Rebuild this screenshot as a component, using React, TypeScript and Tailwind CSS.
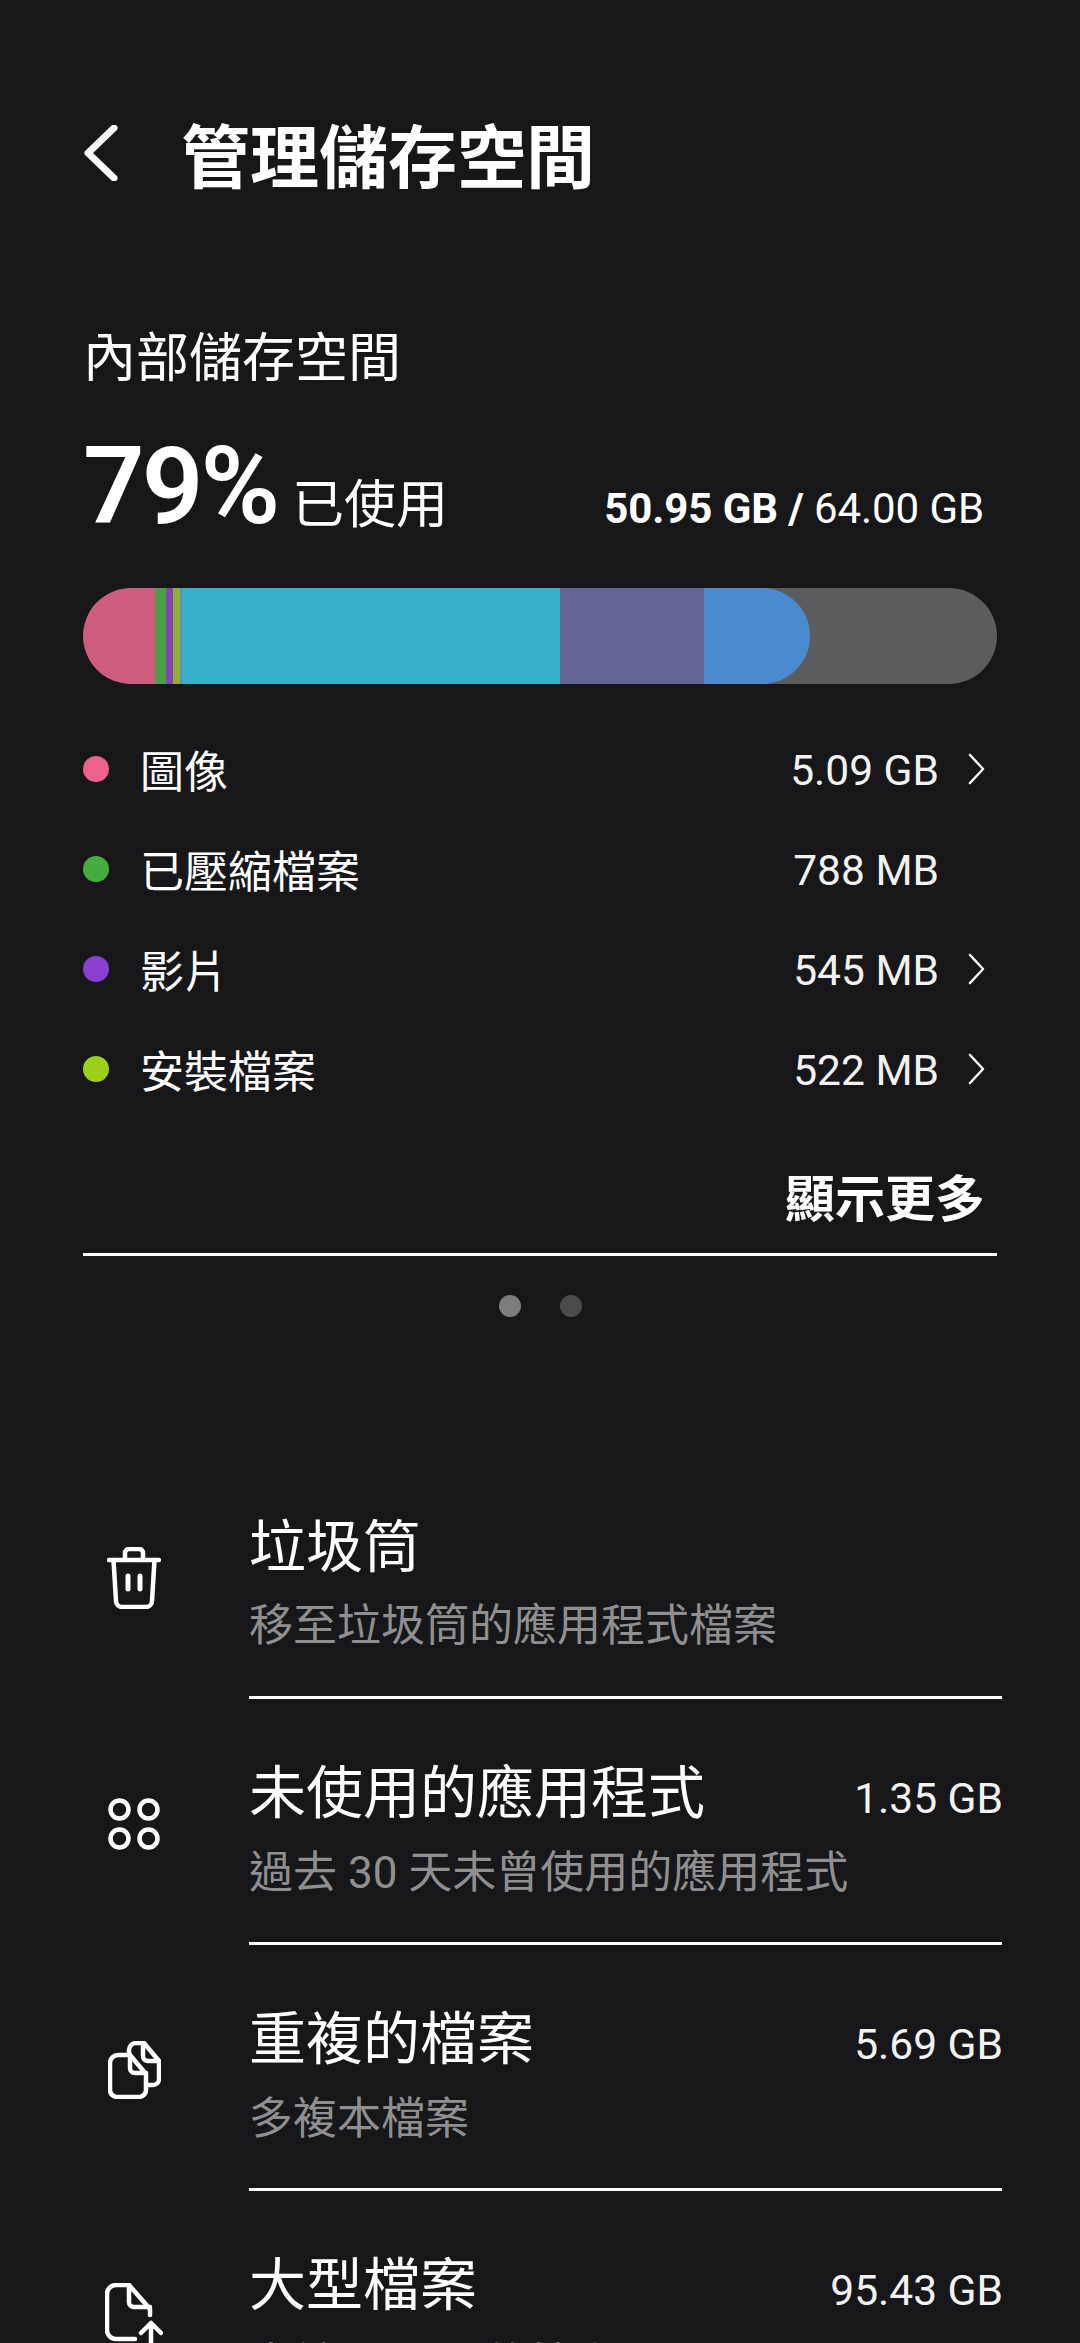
const USAGE = [
  { color: '#cf5b7e', width: 72 },
  { color: '#4c9f45', width: 11 },
  { color: '#8344b8', width: 7 },
  { color: '#93ae2e', width: 7 },
  { color: '#5b8fd0', width: 2 },
  { color: '#38afc9', width: 378 },
  { color: '#636694', width: 144 },
  { color: '#4a8ad0', width: 106 },
];

const CATEGORIES = [
  { name: '圖像', size: '5.09 GB', color: '#f0608c', arrow: true },
  { name: '已壓縮檔案', size: '788 MB', color: '#45ad3d', arrow: false },
  { name: '影片', size: '545 MB', color: '#8a3fd0', arrow: true },
  { name: '安裝檔案', size: '522 MB', color: '#9ccf1c', arrow: true },
];

function TrashIcon() {
  return (
    <svg width="54" height="62" viewBox="0 0 54 62" fill="none" stroke="white" strokeWidth="4.500" strokeLinecap="round" strokeLinejoin="round">
      <path d="M2 13h50" />
      <path d="M6.500 13l2.500 41a6 6 0 0 0 6 6h24a6 6 0 0 0 6-6l2.500-41" />
      <path d="M18 13V6a4 4 0 0 1 4-4h10a4 4 0 0 1 4 4v7" />
      <path d="M21 29v13M33 29v13" strokeWidth="5" />
    </svg>
  );
}

function AppsIcon() {
  return (
    <svg width="52" height="52" viewBox="0 0 52 52" fill="none" stroke="white" strokeWidth="4.500">
      <circle cx="11.500" cy="11.500" r="9" />
      <circle cx="40.500" cy="11.500" r="9" />
      <circle cx="11.500" cy="40.500" r="9" />
      <circle cx="40.500" cy="40.500" r="9" />
    </svg>
  );
}

function DuplicateIcon() {
  return (
    <svg width="53" height="58" viewBox="0 0 53 58" fill="none" stroke="white" strokeWidth="4.500" strokeLinecap="round" strokeLinejoin="round">
      <path d="M21 12V9a7 7 0 0 1 7-7h8l15 18v18a6 6 0 0 1-6 6h-7" />
      <path d="M35 2v13a5 5 0 0 0 5 5h11" />
      <path d="M2 22a8 8 0 0 1 8-8h12l16 19v16a7 7 0 0 1-7 7H9a7 7 0 0 1-7-7z" />
      <path d="M22 14v13a5 5 0 0 0 5 5h11" />
    </svg>
  );
}

function LargeFileIcon() {
  return (
    <svg width="58" height="66" viewBox="0 0 58 66" fill="none" stroke="white" strokeWidth="4.500" strokeLinecap="round" strokeLinejoin="round">
      <path d="M30 56H11a9 9 0 0 1-9-9V11a9 9 0 0 1 9-9h13l21 24v6" />
      <path d="M24 2v17a5 5 0 0 0 5 5h16" />
      <path d="M46 66V40M36 50l10-10 10 10" />
    </svg>
  );
}

const ITEMS = [
  { title: '垃圾筒', sub: '移至垃圾筒的應用程式檔案', size: '', icon: <TrashIcon /> },
  { title: '未使用的應用程式', sub: '過去 30 天未曾使用的應用程式', size: '1.35 GB', icon: <AppsIcon /> },
  { title: '重複的檔案', sub: '多複本檔案', size: '5.69 GB', icon: <DuplicateIcon /> },
  { title: '大型檔案', sub: '大於 25 MB 的檔案', size: '95.43 GB', icon: <LargeFileIcon /> },
];

export default function App() {
  return (
    <div className="h-[2343px] w-[1080px] overflow-hidden bg-[#17171a] text-white font-['Roboto','Noto_Sans_CJK_TC',sans-serif]">
      {/* Header */}
      <div className="flex h-[100px] items-center pt-[110px] box-content">
        <svg className="mb-[14px] ml-[83px]" width="36" height="56" viewBox="0 0 36 56" fill="none" stroke="#fafafa" strokeWidth="7" strokeLinecap="round" strokeLinejoin="round">
          <path d="M31 3L5 28l26 25" />
        </svg>
        <h1 className="mb-[2px] ml-[62px] text-[69px] leading-none font-bold">管理儲存空間</h1>
      </div>

      {/* Storage summary */}
      <div className="px-[83px] pt-[117px]">
        <div className="text-[53px] leading-[64px]">內部儲存空間</div>
        <div className="mt-[35px] flex items-baseline justify-between pr-[13px]">
          <div className="flex items-baseline">
            <span className="text-[108px] leading-[120px] font-semibold tracking-[-3px]">79%</span>
            <span className="ml-[15px] text-[52px] leading-none">已使用</span>
          </div>
          <div className="text-[42px] leading-none tracking-[-0.1px]">
            <span className="font-bold">50.95 GB / </span>
            <span>64.00 GB</span>
          </div>
        </div>

        <div className="mt-[42px] h-[96px] w-[914px] overflow-hidden rounded-full bg-[#5c5c5e]">
          <div className="flex h-full w-[727px] overflow-hidden rounded-full">
            {USAGE.map((seg) => (
              <div key={seg.color} className="h-full shrink-0" style={{ width: seg.width, backgroundColor: seg.color }} />
            ))}
          </div>
        </div>

        <div className="mt-[35px]">
          {CATEGORIES.map((cat) => (
            <div key={cat.name} className="flex h-[100px] items-center">
              <span className="h-[26px] w-[26px] rounded-full" style={{ backgroundColor: cat.color }} />
              <span className="ml-[31px] pt-[8px] text-[44px]">{cat.name}</span>
              <span className="ml-auto pt-[3px] text-[42.5px] text-[#f2f2f2]">{cat.size}</span>
              <span className="ml-[29px] flex w-[29px] justify-end pr-[12px]">
                {cat.arrow && (
                  <svg width="18" height="34" viewBox="0 0 18 34" fill="none" stroke="#f5f5f5" strokeWidth="2.500" strokeLinecap="round" strokeLinejoin="round">
                    <path d="M2 2l14 15L2 32" />
                  </svg>
                )}
              </span>
            </div>
          ))}
        </div>

        <div className="mt-[51px] flex justify-end border-b-[3px] border-white pb-[23px]">
          <span className="pr-[12px] text-[50px] leading-[60px] font-bold">顯示更多</span>
        </div>

        <div className="mt-[39px] flex justify-center gap-[39px]">
          <span className="h-[22px] w-[22px] rounded-full bg-[#7d7d7f]" />
          <span className="h-[22px] w-[22px] rounded-full bg-[#4a4a4c]" />
        </div>
      </div>

      {/* Tools list */}
      <div className="mt-[136px] pr-[78px]">
        {ITEMS.map((item, i) => (
          <div key={item.title} className="flex h-[246px] items-stretch">
            <div className="flex w-[249px] shrink-0 items-center justify-center pl-[19px] pt-[4px]">{item.icon}</div>
            <div className={`flex-1 pt-[59px] ${i < ITEMS.length - 1 ? 'border-b-[3px] border-white' : ''}`}>
              <div className="flex items-center justify-between">
                <span className="text-[57px] leading-[72px]">{item.title}</span>
                {item.size && <span className="-mr-[1px] pt-[9px] text-[42.5px] text-[#f2f2f2]">{item.size}</span>}
              </div>
              <div className="mt-[12px] text-[44px] leading-[60px] text-[#8f8f91]">{item.sub}</div>
            </div>
          </div>
        ))}
      </div>
    </div>
  );
}
